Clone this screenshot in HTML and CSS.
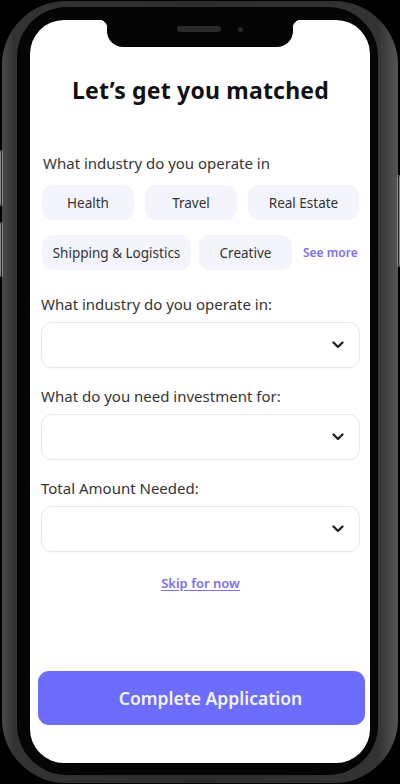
FILE: index.html
```html
<!DOCTYPE html>
<html>
<head>
<meta charset="utf-8">
<link rel="stylesheet" href="styles.css">
</head>
<body>
<div class="phone">
  <span class="side-btn side-l1"></span>
  <span class="side-btn side-l2"></span>
  <span class="side-btn side-r1"></span>
  <div class="bezel">
    <div class="screen">
      <div class="notch"><span class="speaker"></span><span class="camera"></span></div>
      <div class="content">
        <h1 class="title">Let’s get you matched</h1>
        <p class="label label-first">What industry do you operate in</p>
        <div class="chips-row chips-row-1">
          <span class="chip">Health</span>
          <span class="chip">Travel</span>
          <span class="chip">Real Estate</span>
        </div>
        <div class="chips-row chips-row-2">
          <span class="chip chip-wide">Shipping &amp; Logistics</span>
          <span class="chip chip-mid">Creative</span>
          <a class="see-more">See more</a>
        </div>
        <p class="label">What industry do you operate in:</p>
        <div class="select">
          <svg class="chev" width="12" height="8" viewBox="0 0 12 8"><path d="M1.5 1.5 L6 6 L10.5 1.5" fill="none" stroke="#1c1c1c" stroke-width="2.2" stroke-linecap="round" stroke-linejoin="round"/></svg>
        </div>
        <p class="label">What do you need investment for:</p>
        <div class="select">
          <svg class="chev" width="12" height="8" viewBox="0 0 12 8"><path d="M1.5 1.5 L6 6 L10.5 1.5" fill="none" stroke="#1c1c1c" stroke-width="2.2" stroke-linecap="round" stroke-linejoin="round"/></svg>
        </div>
        <p class="label">Total Amount Needed:</p>
        <div class="select">
          <svg class="chev" width="12" height="8" viewBox="0 0 12 8"><path d="M1.5 1.5 L6 6 L10.5 1.5" fill="none" stroke="#1c1c1c" stroke-width="2.2" stroke-linecap="round" stroke-linejoin="round"/></svg>
        </div>
        <a class="skip">Skip for now</a>
      </div>
      <div class="footer">
        <button class="cta">Complete Application</button>
      </div>
    </div>
  </div>
</div>
</body>
</html>
```
FILE: styles.css
```css
* { box-sizing: border-box; }
html, body { margin: 0; padding: 0; background: #000; }
body { width: 400px; height: 784px; overflow: hidden; font-family: "Noto Sans", "Open Sans", sans-serif; }

.phone {
  position: relative;
  width: 396px;
  height: 782px;
  margin: 1px 2px;
  padding: 6px 20px 8px 15px;
  border-radius: 64px;
  background: linear-gradient(90deg, #4a4a4a 0%, #333 3%, #2c2c2c 50%, #333 95%, #555 100%);
}
.side-btn { position: absolute; width: 3px; background: #2a2a2a; border: 1px solid #888; border-radius: 2px; }
.side-l1 { left: -2px; top: 149px; height: 56px; }
.side-l2 { left: -2px; top: 221px; height: 55px; }
.side-r1 { right: -2px; top: 174px; height: 92px; }

.bezel {
  height: 100%;
  padding: 13px 8px 12px 13px;
  border-radius: 50px;
  background: #050505;
}
.screen {
  position: relative;
  height: 100%;
  background: #fff;
  border-radius: 34px;
  display: flex;
  flex-direction: column;
  overflow: hidden;
}
.notch {
  position: absolute;
  top: 0;
  left: 77px;
  width: 186px;
  height: 27px;
  background: #050505;
  border-radius: 0 0 16px 16px;
}
.notch::before, .notch::after {
  content: "";
  position: absolute;
  top: 0;
  width: 8px;
  height: 8px;
}
.notch::before { left: -8px; background: radial-gradient(circle at 0 100%, transparent 8px, #050505 8.5px); }
.notch::after { right: -8px; background: radial-gradient(circle at 100% 100%, transparent 8px, #050505 8.5px); }
.speaker { position: absolute; left: 70px; top: 6px; width: 44px; height: 6px; border-radius: 3px; background: #2a2a2a; }
.camera { position: absolute; left: 131px; top: 7px; width: 5px; height: 5px; border-radius: 50%; background: #262630; }

.content {
  padding: 54px 10px 0 11px;
  display: flex;
  flex-direction: column;
}
.title {
  margin: 0;
  text-align: center;
  font-size: 23px;
  line-height: 32px;
  font-weight: 700;
  color: #111;
  letter-spacing: 0.2px;
}
.label {
  margin: 0;
  font-size: 15px;
  line-height: 20px;
  color: #353535;
}
.label-first { margin: 47px 0 0 2px; }
.chips-row { display: flex; }
.chips-row-1 { margin-top: 12px; gap: 11px; }
.chips-row-2 { margin-top: 15px; gap: 8px; align-items: center; }
.chip {
  height: 35px;
  display: flex;
  align-items: center;
  justify-content: center;
  padding: 0 12px;
  border-radius: 11px;
  background: #f4f4fd;
  font-size: 13.5px;
  color: #333;
  white-space: nowrap;
}
.chips-row-1 .chip { flex: 0 0 92px; }
.chips-row-1 .chip:last-child { flex: 0 0 111px; }
.chips-row-1 { padding-left: 1px; }
.chips-row-2 { padding-left: 1px; }
.chip-wide { width: 149px; }
.chip-mid { width: 93px; }
.see-more {
  margin-left: 3px;
  font-size: 12px;
  font-weight: 600;
  color: #7b6ff2;
}
.chips-row-2 + .label { margin-top: 24px; }
.select {
  height: 46px;
  margin-top: 8px;
  border: 1px solid #e8e8ea;
  border-radius: 11px;
  display: flex;
  align-items: center;
  justify-content: flex-end;
  padding-right: 15px;
  box-shadow: 0 1px 2px rgba(0,0,0,0.03);
}
.select + .label { margin-top: 18px; }
.chev { display: block; }
.skip {
  align-self: center;
  margin-top: 22px;
  font-size: 13px;
  font-weight: 600;
  color: #7b6ff2;
  text-decoration: underline;
  text-underline-offset: 2px;
}
.footer {
  margin-top: auto;
  padding: 0 5px 38px 8px;
}
.cta {
  width: 100%;
  height: 54px;
  border: 0;
  border-radius: 11px;
  background: #6c6cfd;
  color: #f4f4ff;
  padding-left: 24px;
  font-family: "Noto Sans", "Open Sans", sans-serif;
  font-size: 17.5px;
  font-weight: 600;
}
```
